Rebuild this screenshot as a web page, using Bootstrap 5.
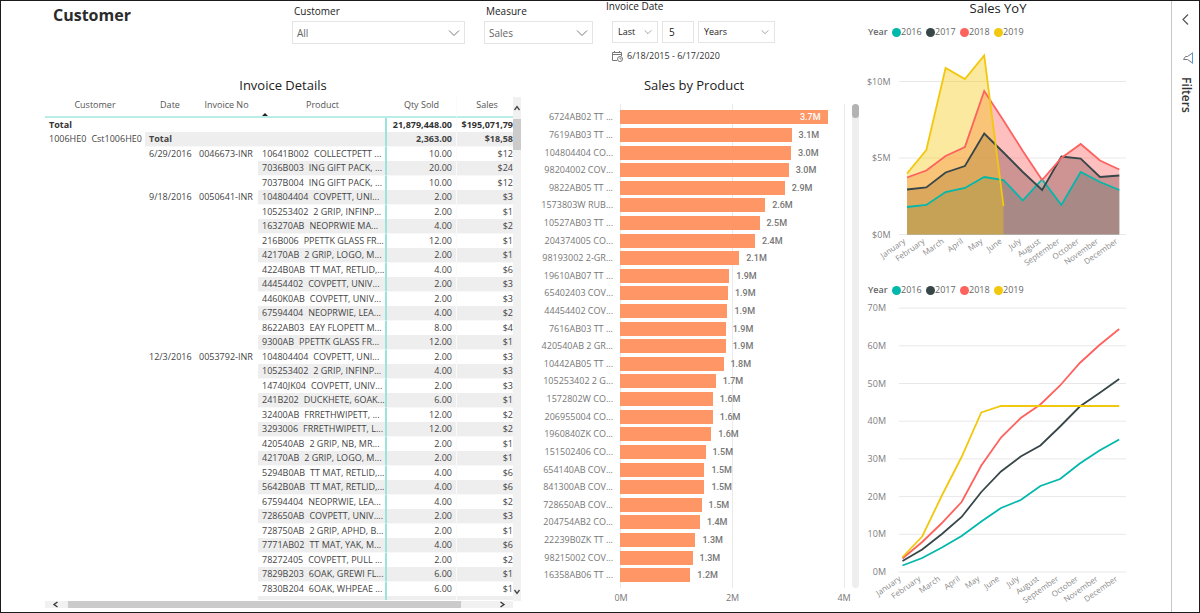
<!DOCTYPE html>
<html lang="en">
<head>
<meta charset="utf-8">
<meta name="viewport" content="width=device-width, initial-scale=1">
<title>Customer</title>
<link href="https://cdn.jsdelivr.net/npm/bootstrap@5.3.0/dist/css/bootstrap.min.css" rel="stylesheet">
<style>
  body { font-family: "Open Sans", "Noto Sans", sans-serif; font-size: 9px; line-height: 14px; color: #444; background: #fff; }
  .report { border: 1px solid #1c1a1c; }
  .canvas { display: grid; grid-template-columns: 815fr 311fr; padding-left: 44px; min-height: 0; min-width: 0; }
  .canvas-left { min-height: 0; }
  .slicers { display: grid; grid-template-columns: 247fr 192fr 122fr 254fr; height: 77px; }
  .visuals { display: grid; grid-template-columns: 483fr 332fr; min-height: 0; }
  .page-title { font-size: 16px; line-height: 28px; font-weight: 700; color: #2b2b2b; padding-left: 8px; }
  .visual-title { font-size: 13px; line-height: 16px; font-weight: 400; color: #222; text-align: center; margin: 0; }
  .yoy .visual-title { line-height: 15px; }
  .slicer-label { font-size: 10px; line-height: 20px; color: #222; padding-left: 2px; }
  .slicer-label.upper { line-height: 10px; padding: 0; }
  .slot-customer { padding-right: 19px; }
  .slot-measure { padding-right: 13px; }
  .form-select.slicer, .form-control.slicer { font-size: 10px; line-height: 14px; height: 23px; padding: 3px 20px 3px 4px; border: 1px solid #e4e4e4; border-radius: 0; color: #666; background-position: right 4px center; background-size: 12px 12px;
    background-image: url("data:image/svg+xml,%3csvg xmlns='http://www.w3.org/2000/svg' viewBox='0 0 12 12'%3e%3cpath fill='none' stroke='%23777' d='M1 3.5l5 5 5-5'/%3e%3c/svg%3e"); }
  .form-select.slicer.small-arrow, .form-control.slicer { height: 22px; font-size: 9px; color: #222; padding-left: 5px; background-size: 8px 8px; background-position: right 5px center; }
  .form-control.slicer { background-image: none; font-size: 10px; padding: 3px 6px; width: 32px; }
  .w-last { width: 46px; } .w-years { width: 77px; }
  .date-controls { padding: 10px 0 0 6px; }
  .date-range { font-size: 9px; line-height: 14px; color: #333; padding: 6px 0 0 6px; }

  .invoice { min-height: 0; padding-right: 7px; }
  .grid-frame { display: grid; grid-template-columns: minmax(0, 1fr) 8px; grid-template-rows: minmax(0, 1fr) 7px; min-height: 0; margin-bottom: 4px; }
  .grid-body { overflow: hidden; min-height: 0; margin-bottom: 1px; }
  .table.invoice-grid { table-layout: fixed; color: #444; margin: 0; border-collapse: separate; border-spacing: 0; }
  .invoice-grid th, .invoice-grid td { padding: 0 4px !important; border: 0; white-space: nowrap; line-height: 14px; font-size: 9px; vertical-align: middle; }
  .invoice-grid thead th { font-weight: 400; text-align: center; height: 21px; padding-bottom: 3px !important; border-bottom: 2px solid #b9ede8; position: relative; color: #555; }
  .invoice-grid tbody tr { height: 14px; }
  .invoice-grid tbody tr:nth-child(even) { height: 15px; }
  .invoice-grid tbody tr:nth-child(even) td.band { background: #eee; border-bottom: 1px solid #f8f8f8; }
  .invoice-grid td.num { text-align: right; }
  .invoice-grid td.sales, .invoice-grid th.sales { padding-right: 0 !important; border-left: 1px solid #fafafa; }
  .invoice-grid tbody td.product-end { border-right: 2px solid #9be4dc; }
  .invoice-grid .fw-bold td { font-weight: 700; color: #333; }
  .item-name { margin-left: 5px; }
  .c-customer { width: 100px; } .c-date { width: 50px; } .c-invoice { width: 63px; } .c-product { width: 129px; } .c-qty { width: 69px; }
  .sort-mark { position: absolute; left: 4px; bottom: 0; border: 3px solid transparent; border-top: 0; border-bottom-color: #222; }
  .track { background: #f1f1f1; }
  .track svg { display: block; flex: none; }
  .thumb { background: #cbcbcb; }
  .v-thumb { height: 31px; }

  .products { min-height: 0; }
  .plot { display: grid; grid-template-columns: 84px 1fr 15px; min-height: 0; margin: 11px 0 3px; color: #777; }
  .bars { background: linear-gradient(#eaeaea, #eaeaea) left / 1px 100% no-repeat, linear-gradient(#eaeaea, #eaeaea) center / 1px 100% no-repeat, linear-gradient(#eaeaea, #eaeaea) right / 1px 100% no-repeat; }
  .bars, .cats { padding: 5px 0 4px; }
  .cats { padding-right: 7px; text-align: right; }
  .bars > div, .cats > div { flex: 1 1 0; display: flex; align-items: center; min-height: 0; }
  .cats > div { justify-content: flex-end; white-space: nowrap; }
  .bar { height: 14px; background: #fe9666; flex: none; text-align: right; }
  .bar-value { font-family: Roboto, sans-serif; font-weight: 500; font-size: 9px; padding: 0 7px; color: #777; }
  .bar .bar-value { color: #fff; }
  .bar-track { width: 7px; margin-left: 7px; border-radius: 4px; background: #eee; }
  .bar-thumb { height: 14px; border-radius: 4px; background: #b3b3b3; }
  .axis { display: flex; justify-content: space-between; padding: 0 4px 0 81px; margin-bottom: 7px; color: #777; }
  .axis span { width: 24px; text-align: center; }

  .yoy { padding: 0 41px 0 6px; min-width: 0; }
  .yoy svg { display: block; width: 100%; overflow: visible; }
  .yoy text { font-size: 9px; fill: #808080; }
  .yoy text.month { font-size: 8px; fill: #8a8a8a; }
  .legend-row { font-size: 9px; color: #666; padding: 1px 0 0 2px; }
  .legend-row b { font-weight: 600; width: 24px; }
  .legend-row span { width: 34px; display: flex; align-items: center; }
  .legend-row i { width: 9px; height: 9px; border-radius: 50%; flex: none; }
  .filters { width: 28px; flex: none; border-left: 1px solid #c8c8c8; }
  .filters .btn { border: 0; border-radius: 0; padding: 0; }
  .filters-label { writing-mode: vertical-rl; font-size: 12px; line-height: 14px; font-weight: 600; color: #333; }
</style>
</head>
<body>
<div class="report d-flex vh-100">
  <main class="canvas flex-grow-1">
    <div class="canvas-left d-flex flex-column">
      <header class="slicers">
        <h1 class="page-title m-0">Customer</h1>
        <div class="slot-customer">
          <label class="slicer-label d-block" for="customer">Customer</label>
          <select id="customer" class="form-select slicer"><option>All</option></select>
        </div>
        <div class="slot-measure">
          <label class="slicer-label d-block" for="measure">Measure</label>
          <select id="measure" class="form-select slicer"><option>Sales</option></select>
        </div>
        <div>
          <label class="slicer-label upper d-block" for="count">Invoice Date</label>
          <div class="date-controls d-flex">
            <select class="form-select slicer small-arrow w-last me-1" aria-label="Direction"><option>Last</option></select>
            <input id="count" class="form-control slicer me-1" value="5">
            <select class="form-select slicer small-arrow w-years" aria-label="Unit"><option>Years</option></select>
          </div>
          <div class="date-range d-flex align-items-center gap-1">
            <svg width="11" height="11" viewBox="0 0 11 11" fill="none" stroke="#777"><path d="M5 9.5H.5v-8h9V5M.5 3.5h9M2.5 0v2M7.5 0v2"/><circle cx="8" cy="8" r="2.5"/><path d="M8 6.5V8h1.500" stroke-width=".8"/></svg>
            <span>6/18/2015 - 6/17/2020</span>
          </div>
        </div>
      </header>
      <div class="visuals flex-grow-1">
        <section class="invoice d-flex flex-column">
          <h2 class="visual-title mb-1">Invoice Details</h2>
          <div class="grid-frame flex-grow-1">
            <div class="grid-body">
              <table class="table invoice-grid">
                <colgroup><col class="c-customer"><col class="c-date"><col class="c-invoice"><col class="c-product"><col class="c-qty"><col></colgroup>
                <thead><tr><th>Customer</th><th>Date</th><th>Invoice No</th><th>Product<span class="sort-mark"></span></th><th>Qty Sold</th><th class="sales">Sales</th></tr></thead>
                <tbody id="invoiceRows"></tbody>
              </table>
            </div>
            <div class="track d-flex flex-column">
              <svg width="8" height="22" fill="none" stroke="#444" stroke-width="1.300"><path d="M1.500 13L4 9.500 6.500 13"/></svg>
              <div class="thumb v-thumb"></div>
              <svg class="mt-auto" width="8" height="14" fill="none" stroke="#444" stroke-width="1.300"><path d="M1.500 3L4 6.500 6.500 3"/></svg>
            </div>
            <div class="track d-flex">
              <svg width="23" height="7" fill="none" stroke="#333" stroke-width="1.300"><path d="M12.500 1L9 3.500l3.500 2.500"/></svg>
              <div class="thumb flex-grow-1"></div>
              <svg width="52" height="7" fill="none" stroke="#333" stroke-width="1.300"><path d="M39.500 1L43 3.500 39.500 6"/></svg>
            </div>
          </div>
        </section>
        <section class="products d-flex flex-column">
          <h2 class="visual-title">Sales by Product</h2>
          <div class="plot flex-grow-1 ps-2">
            <div class="cats d-flex flex-column" id="cats"></div>
            <div class="bars d-flex flex-column" id="bars"></div>
            <div class="bar-track"><div class="bar-thumb"></div></div>
          </div>
          <div class="axis"><span>0M</span><span>2M</span><span>4M</span></div>
        </section>
      </div>
    </div>
    <section class="yoy">
      <h2 class="visual-title">Sales YoY</h2>
      <div class="legend-row d-flex align-items-center mt-2"><b>Year</b></div>
      <svg id="areaChart" viewBox="866 39 264 243" role="img" aria-label="Sales by month"></svg>
      <div class="legend-row d-flex align-items-center"><b>Year</b></div>
      <svg id="lineChart" viewBox="866 297 264 310" role="img" aria-label="Cumulative sales by month"></svg>
    </section>
  </main>
  <aside class="filters d-flex flex-column align-items-center">
    <button class="btn mt-2" type="button" aria-label="Expand filters"><svg width="14" height="22" class="d-block" fill="none" stroke="#555" stroke-width="1.200"><path d="M9 5.500L4 10.500l5 5"/></svg></button>
    <svg class="mt-3 mb-2 ms-1" width="12" height="18" fill="none" stroke="#777"><path d="M10.500 6v10L5.500 12.500H1.500L3.500 9.500h2z"/><path d="M10.500 5.500v11" stroke="#4a9fe0"/></svg>
    <span class="filters-label pt-1">Filters</span>
  </aside>
</div>
<script src="https://cdn.jsdelivr.net/npm/bootstrap@5.3.0/dist/js/bootstrap.bundle.min.js"></script>
<script>
const invoices = [
  ['6/29/2016', '0046673-INR', [
    ['10641B002', 'COLLECTPETT ...', '10.00', '$12'], ['7036B003', 'ING GIFT PACK, ...', '20.00', '$24'], ['7037B004', 'ING GIFT PACK, ...', '10.00', '$12']]],
  ['9/18/2016', '0050641-INR', [
    ['104804404', 'COVPETT, UNI...', '2.00', '$3'], ['105253402', '2 GRIP, INFINP...', '2.00', '$1'], ['163270AB', 'NEOPRWIE MA...', '4.00', '$2'],
    ['216B006', 'PPETTK GLASS FR...', '12.00', '$1'], ['42170AB', '2 GRIP, LOGO, M...', '2.00', '$1'], ['4224B0AB', 'TT MAT, RETLID,...', '4.00', '$6'],
    ['44454402', 'COVPETT, UNIV...', '2.00', '$3'], ['4460K0AB', 'COVPETT, UNIV...', '2.00', '$3'], ['67594404', 'NEOPRWIE, LEA...', '4.00', '$2'],
    ['8622AB03', 'EAY FLOPETT M...', '8.00', '$4'], ['9300AB', 'PPETTK GLASS FR...', '12.00', '$1']]],
  ['12/3/2016', '0053792-INR', [
    ['104804404', 'COVPETT, UNI...', '2.00', '$3'], ['105253402', '2 GRIP, INFINP...', '4.00', '$3'], ['14740JK04', 'COVPETT, UNIV...', '2.00', '$3'],
    ['241B202', 'DUCKHETE, 6OAK...', '6.00', '$1'], ['32400AB', 'FRRETHWIPETT, ...', '12.00', '$2'], ['3293006', 'FRRETHWIPETT, L...', '12.00', '$2'],
    ['420540AB', '2 GRIP, NB, MR...', '2.00', '$1'], ['42170AB', '2 GRIP, LOGO, M...', '2.00', '$1'], ['5294B0AB', 'TT MAT, RETLID,...', '4.00', '$6'],
    ['5642B0AB', 'TT MAT, RETLID,...', '4.00', '$6'], ['67594404', 'NEOPRWIE, LEA...', '4.00', '$2'], ['728650AB', 'COVPETT, UNIV....', '2.00', '$3'],
    ['728750AB', '2 GRIP, APHD, B...', '2.00', '$1'], ['7771AB02', 'TT MAT, YAK, M...', '4.00', '$6'], ['78272405', 'COVPETT, PULL ...', '2.00', '$2'],
    ['7829B203', '6OAK, GREWI FL...', '6.00', '$1'], ['7830B204', '6OAK, WHPEAE ...', '6.00', '$1'], ['', '', '', '']]]
];
let rows = `<tr class="fw-bold"><td>Total</td><td colspan="3" class="product-end"></td><td class="num">21,879,448.00</td><td class="num sales">$195,071,79</td></tr>
<tr><td>1006HE0<span class="item-name">Cst1006HE0</span></td><td class="band product-end fw-bold" colspan="3">Total</td><td class="num band fw-bold">2,363.00</td><td class="num sales band fw-bold">$18,58</td></tr>`;
for (const [date, no, items] of invoices)
  items.forEach(([code, name, qty, sales], i) => {
    rows += `<tr><td></td><td>${i ? '' : date}</td><td>${i ? '' : no}</td><td class="band product-end">${code}<span class="item-name">${name}</span></td><td class="num band">${qty}</td><td class="num sales band">${sales}</td></tr>`;
  });
invoiceRows.innerHTML = rows;

const products = [
  ['6724AB02 TT ...', 3.69, '3.7M'], ['7619AB03 TT ...', 3.05, '3.1M'], ['104804404 CO...', 3.04, '3.0M'], ['98204002 COV...', 3.0, '3.0M'], ['9822AB05 TT ...', 2.93, '2.9M'],
  ['1573803W RUB...', 2.58, '2.6M'], ['10527AB03 TT ...', 2.48, '2.5M'], ['204374005 CO...', 2.4, '2.4M'], ['98193002 2-GR...', 2.12, '2.1M'], ['19610AB07 TT ...', 1.94, '1.9M'],
  ['65402403 COV...', 1.92, '1.9M'], ['44454402 COV...', 1.91, '1.9M'], ['7616AB03 TT ...', 1.88, '1.9M'], ['420540AB 2 GR...', 1.88, '1.9M'], ['10442AB05 TT ...', 1.84, '1.8M'],
  ['105253402 2 G...', 1.7, '1.7M'], ['1572802W CO...', 1.65, '1.6M'], ['206955004 CO...', 1.65, '1.6M'], ['1960840ZK CO...', 1.62, '1.6M'], ['151502406 CO...', 1.52, '1.5M'],
  ['654140AB COV...', 1.5, '1.5M'], ['841300AB COV...', 1.5, '1.5M'], ['728650AB COV...', 1.45, '1.5M'], ['204754AB2 CO...', 1.42, '1.4M'], ['22239B0ZK TT ...', 1.34, '1.3M'],
  ['98215002 COV...', 1.29, '1.3M'], ['16358AB06 TT ...', 1.25, '1.2M']
];
cats.innerHTML = products.map(p => `<div>${p[0]}</div>`).join('');
bars.innerHTML = products.map(([, v, label], i) => {
  const value = `<span class="bar-value">${label}</span>`;
  return `<div><div class="bar" style="width:${v * 25}%">${i ? '' : value}</div>${i ? value : ''}</div>`;
}).join('');

const years = { 2016: '#01b8aa', 2017: '#374649', 2018: '#fd625e', 2019: '#f2c80f' };
document.querySelectorAll('.legend-row').forEach(row => {
  for (const y in years) row.innerHTML += `<span><i style="background:${years[y]}"></i>${y}</span>`;
});
const months = ['January', 'February', 'March', 'April', 'May', 'June', 'July', 'August', 'September', 'October', 'November', 'December'];
function chart(el, series, { x0, step, base, unit, ticks, area }) {
  let out = ticks.map(([v, label]) => `<path d="M899 ${base - v * unit}H1126" stroke="#e8e8e8"/><text x="${area ? 890.5 : 886}" y="${base - v * unit + 3}" text-anchor="end">${label}</text>`).join('');
  const pts = s => s.map((y, i) => `${x0 + i * step} ${y}`).join('L');
  if (area) for (const y in series) out += `<path d="M${x0} ${base}L${pts(series[y])}V${base}Z" fill="${years[y]}" opacity=".4"/>`;
  for (const y in series) out += `<path d="M${pts(series[y])}" fill="none" stroke="${years[y]}" stroke-width="1.8"/>`;
  months.forEach((m, i) => { const x = x0 + i * step - 1, y = base + 8; out += `<text class="month" text-anchor="end" transform="translate(${x} ${y}) rotate(-35)">${m}</text>`; });
  el.innerHTML = out;
}
chart(areaChart, {
  2016: [207, 205, 192, 188, 177, 180, 200.5, 179.5, 205, 172, 182, 190],
  2017: [189.5, 187.5, 172.5, 166, 133.5, 152.5, 172, 190, 156.5, 158.5, 177, 175.5],
  2018: [177.5, 170.5, 156, 147, 91, 120.5, 151, 180, 158, 144, 160.5, 169.5],
  2019: [173.5, 150, 68, 79, 55.5, 206]
}, { x0: 907, step: 19.3, base: 234.5, unit: 15.3, ticks: [[0, '$0M'], [5, '$5M'], [10, '$10M']], area: true });
chart(lineChart, {
  2016: [565.5, 558, 547.5, 536, 521.5, 508, 500, 486, 479, 463.5, 450.5, 439.5],
  2017: [561, 549.5, 534, 517, 492, 471.5, 456.5, 445.5, 426.5, 406.5, 393, 379],
  2018: [558.5, 542, 523, 502, 465.5, 437.5, 418, 404.5, 385.5, 363, 345, 329],
  2019: [557, 536.5, 495.5, 457, 412.5, 406, 406, 406, 406, 406, 406, 406]
}, { x0: 902.5, step: 19.7, base: 572, unit: 3.77, ticks: [0, 10, 20, 30, 40, 50, 60, 70].map(v => [v, v + 'M']) });
</script>
</body>
</html>
